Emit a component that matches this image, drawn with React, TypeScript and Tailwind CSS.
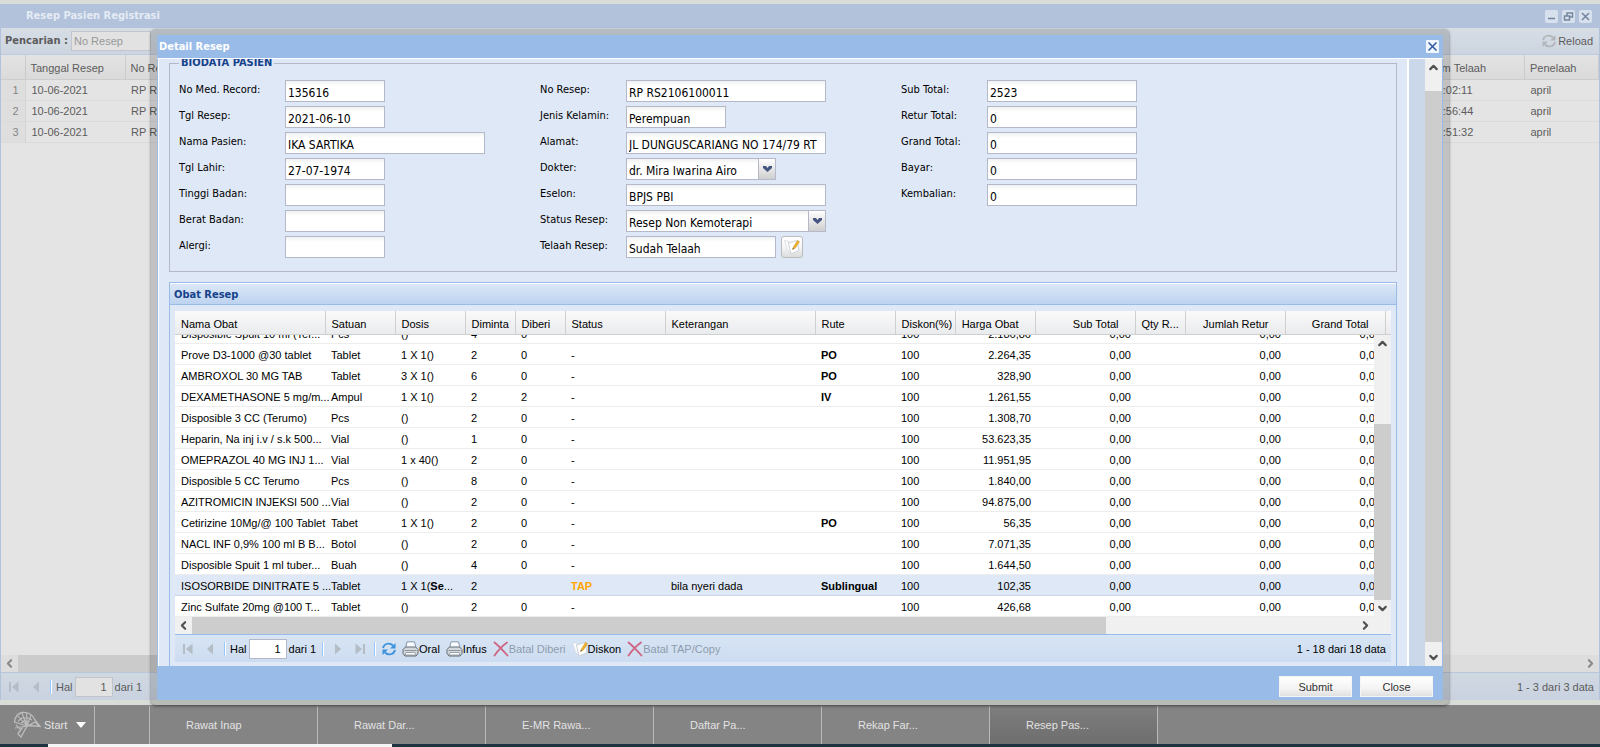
import React from 'react';
import { ChevronDown, ChevronLeft, ChevronRight, ChevronUp } from 'lucide-react';

type Row = {
  name: string;
  unit: string;
  dose: React.ReactNode;
  asked: string;
  given: string;
  status: string;
  note?: string;
  route?: string;
  price: string;
  selected?: boolean;
};

const ROWS: Row[] = [
  { name: 'Disposible Spuit 10 ml (Ter...', unit: 'Pcs', dose: '()', asked: '4', given: '0', status: '', price: '2.186,86' },
  { name: 'Prove D3-1000 @30 tablet', unit: 'Tablet', dose: '1 X 1()', asked: '2', given: '0', status: '-', route: 'PO', price: '2.264,35' },
  { name: 'AMBROXOL 30 MG TAB', unit: 'Tablet', dose: '3 X 1()', asked: '6', given: '0', status: '-', route: 'PO', price: '328,90' },
  { name: 'DEXAMETHASONE 5 mg/m...', unit: 'Ampul', dose: '1 X 1()', asked: '2', given: '2', status: '-', route: 'IV', price: '1.261,55' },
  { name: 'Disposible 3 CC (Terumo)', unit: 'Pcs', dose: '()', asked: '2', given: '0', status: '-', price: '1.308,70' },
  { name: 'Heparin, Na inj i.v / s.k 500...', unit: 'Vial', dose: '()', asked: '1', given: '0', status: '-', price: '53.623,35' },
  { name: 'OMEPRAZOL 40 MG INJ 1...', unit: 'Vial', dose: '1 x 40()', asked: '2', given: '0', status: '-', price: '11.951,95' },
  { name: 'Disposible 5 CC Terumo', unit: 'Pcs', dose: '()', asked: '8', given: '0', status: '-', price: '1.840,00' },
  { name: 'AZITROMICIN INJEKSI 500 ...', unit: 'Vial', dose: '()', asked: '2', given: '0', status: '-', price: '94.875,00' },
  { name: 'Cetirizine 10Mg/@ 100 Tablet', unit: 'Tabet', dose: '1 X 1()', asked: '2', given: '0', status: '-', route: 'PO', price: '56,35' },
  { name: 'NACL INF 0,9% 100 ml B B...', unit: 'Botol', dose: '()', asked: '2', given: '0', status: '-', price: '7.071,35' },
  { name: 'Disposible Spuit 1 ml tuber...', unit: 'Buah', dose: '()', asked: '4', given: '0', status: '-', price: '1.644,50' },
  { name: 'ISOSORBIDE DINITRATE 5 ...', unit: 'Tablet', dose: <>1 X 1(<b>Se</b>...</>, asked: '2', given: '', status: 'TAP', note: 'bila nyeri dada', route: 'Sublingual', price: '102,35', selected: true },
  { name: 'Zinc Sulfate 20mg @100 T...', unit: 'Tablet', dose: '()', asked: '2', given: '0', status: '-', price: '426,68' },
];

const COLUMNS = [
  { title: 'Nama Obat', width: 150 },
  { title: 'Satuan', width: 70 },
  { title: 'Dosis', width: 70 },
  { title: 'Diminta', width: 50 },
  { title: 'Diberi', width: 50 },
  { title: 'Status', width: 100 },
  { title: 'Keterangan', width: 150 },
  { title: 'Rute', width: 80 },
  { title: 'Diskon(%)', width: 60 },
  { title: 'Harga Obat', width: 80, right: true },
  { title: 'Sub Total', width: 100, right: true },
  { title: 'Qty R...', width: 50 },
  { title: 'Jumlah Retur', width: 100, right: true },
  { title: 'Grand Total', width: 100, right: true },
];

const REGISTRATIONS = [
  { no: 1, date: '10-06-2021', time: '10:02:11' },
  { no: 2, date: '10-06-2021', time: '10:56:44' },
  { no: 3, date: '10-06-2021', time: '10:51:32' },
];

const TASKS = ['Rawat Inap', 'Rawat Dar...', 'E-MR Rawa...', 'Daftar Pa...', 'Rekap Far...', 'Resep Pas...'];

const Columns = () => (
  <colgroup>
    {COLUMNS.map(c => <col key={c.title} style={{ width: c.width }} />)}
  </colgroup>
);

const FIELD = "h-[22px] min-w-0 border border-[#b5b8c8] bg-gradient-to-b from-[#f0f2f2] via-white via-25% to-white px-[2px] pt-[3px] font-['DejaVu_Sans_Condensed','Noto_Sans',sans-serif] text-[12px] leading-[16px] text-black outline-none";

const HEADING = "font-['DejaVu_Sans_Condensed','Noto_Sans',sans-serif] text-[11px] font-bold";

function Field({ id, label, labelClass, children }: { id: string; label: string; labelClass: string; children: React.ReactNode }) {
  return (
    <div className="flex h-[22px]">
      <label htmlFor={id} className={`${labelClass} shrink-0 pt-[3px] leading-[14px]`}>{label}</label>
      {children}
    </div>
  );
}

function Combo({ id, value, className }: { id: string; value: string; className: string }) {
  return (
    <span className={`${className} flex`}>
      <select id={id} defaultValue={value} className={`${FIELD} flex-1 appearance-none border-r-0`}>
        <option>{value}</option>
      </select>
      <span className="flex w-[18px] items-center justify-center border border-[#b5b8c8] bg-gradient-to-b from-white to-[#cfcfcf]">
        <svg width="9" height="7" viewBox="0 0 9 7"><path d="M0 0h3l1.500 2L6 0h3v2L4.500 6 0 2z" fill="#44567f" /></svg>
      </span>
    </span>
  );
}

const NoteIcon = () => (
  <svg width="16" height="16" viewBox="0 0 16 16">
    <path d="M0.500 1.500l4 0.800L7 14.500 3.500 11z" fill="#fbfcfd" stroke="#d3d9df" strokeWidth=".7" />
    <path d="M4.500 4L13 1.500 15 11.500 7 15z" fill="#fff" stroke="#bcc3c9" strokeWidth=".7" />
    <path d="M8.500 10.500l1-2.800 4-6.200 2 1.200-4.200 6.300z" fill="#f0b32a" stroke="#c58a20" strokeWidth=".5" />
    <path d="M8.500 10.500l.5-1.500 1 .8z" fill="#444" />
  </svg>
);

const PrintIcon = () => (
  <svg width="17" height="16" viewBox="0 0 17 16">
    <path d="M3.500 7L5 .8h7.500L14 7z" fill="#f8fbff" stroke="#8795a6" />
    <path d="M1 8.500L3.500 6h10L16 8.500v4L14 15H3l-2-2.500z" fill="#d3d8dd" stroke="#626b75" />
    <path d="M2.500 9.500h12" stroke="#8f98a1" />
    <path d="M4 11.500h9l1 2.500H3z" fill="#fff" stroke="#7b848d" strokeWidth=".7" />
  </svg>
);

const CrossIcon = () => (
  <svg width="16" height="16" viewBox="0 0 16 16">
    <path d="M1.500 1.500C6 5 10 9.500 14.500 14.500M14 1.500C9 5 5 9.500 1.500 14.500" fill="none" stroke="#cf6482" strokeWidth="1.800" strokeLinecap="round" />
  </svg>
);

const RefreshIcon = ({ color = '#3d92dc' }: { color?: string }) => (
  <svg width="16" height="16" viewBox="0 0 16 16" fill="none" stroke={color}>
    <path d="M2 7C3 2.500 8.500 1 12 4.500M14 9C13 13.500 7.500 15 4 11.500" strokeWidth="1.800" />
    <path d="M14.500 2v5.500H9zM1.500 14V8.500H7z" fill={color} stroke="none" />
  </svg>
);

function PageArrow({ end, flip, label }: { end?: boolean; flip?: boolean; label: string }) {
  return (
    <button aria-label={label} disabled className={`flex w-[12px] justify-center ${flip ? 'rotate-180' : ''}`}>
      <svg width="12" height="12" viewBox="0 0 12 12" fill="#b4bcc6">
        {end && <path d="M1 1h2v10H1z" />}
        <path d={end ? 'M10.500 .5v11L4 6z' : 'M9 .5v11L3 6z'} />
      </svg>
    </button>
  );
}

const Separator = () => <span className="h-[14px] w-[2px] border-l border-r border-l-[#98c8ff] border-r-white" />;

const GRID_HEADER = 'h-[24px] border-b border-[#d0d0d0] bg-gradient-to-b from-[#fafafa] to-[#eaebed]';

function DrugGrid() {
  return (
    <div className="bg-white">
      <div className={`${GRID_HEADER} overflow-hidden`}>
        <table className="w-[1210px] table-fixed border-collapse">
          <Columns />
          <thead>
            <tr className="h-[23px]">
              {COLUMNS.map(c => (
                <th key={c.title} className={`whitespace-nowrap border-r border-[#cfcfcf] pl-[6px] pt-[3px] font-normal ${c.right ? 'pr-[16px] text-right' : 'text-left'}`}>
                  {c.title}
                </th>
              ))}
            </tr>
          </thead>
        </table>
      </div>
      <div className="flex h-[282px]">
        <div className="flex min-w-0 flex-1 flex-col justify-end overflow-hidden">
          <table className="w-[1210px] table-fixed border-separate border-spacing-0">
            <Columns />
            <tbody>
              {ROWS.map(row => (
                <tr
                  key={row.name}
                  className={`h-[21px] [&>td]:whitespace-nowrap [&>td]:border-b [&>td]:pl-[6px] [&>td]:pr-[4px] [&>td]:pt-[2px] ${row.selected ? 'bg-[#dfe8f6] [&>td]:border-[#c9d5e8]' : '[&>td]:border-[#ededed]'}`}
                >
                  <td>{row.name}</td>
                  <td>{row.unit}</td>
                  <td>{row.dose}</td>
                  <td>{row.asked}</td>
                  <td>{row.given}</td>
                  <td className={row.status === 'TAP' ? 'font-bold text-[#ffa500]' : ''}>{row.status}</td>
                  <td>{row.note}</td>
                  <td className="font-bold">{row.route}</td>
                  <td>100</td>
                  <td className="text-right">{row.price}</td>
                  <td className="text-right">0,00</td>
                  <td />
                  <td className="text-right">0,00</td>
                  <td className="text-right">0,00</td>
                </tr>
              ))}
            </tbody>
          </table>
        </div>
        <div className="flex w-[17px] flex-col items-center bg-[#f0f0f0] text-[#505050]">
          <ChevronUp size={13} strokeWidth={4} className="my-[2px]" />
          <div className="mt-[72px] w-full flex-1 bg-[#cdcdcd]" />
          <ChevronDown size={13} strokeWidth={4} className="my-[2px]" />
        </div>
      </div>
      <div className="flex h-[17px] items-center bg-[#f0f0f0] text-[#505050]">
        <ChevronLeft size={13} strokeWidth={4} className="mx-[2px]" />
        <div className="h-full w-[914px] bg-[#cdcdcd]" />
        <ChevronRight size={13} strokeWidth={4} className="ml-auto mr-[19px]" />
      </div>
    </div>
  );
}

function DrugPaging() {
  return (
    <div className="flex h-[28px] items-center border-t border-[#99bbe8] bg-gradient-to-b from-[#d7e5f4] to-[#cddcf0] pl-[7px] pr-[5px]">
      <PageArrow end label="Halaman pertama" />
      <span className="w-[10px]" />
      <PageArrow label="Halaman sebelumnya" />
      <span className="w-[8px]" />
      <Separator />
      <label htmlFor="page" className="ml-[4px]">Hal</label>
      <input id="page" defaultValue="1" className="mx-[2px] h-[20px] w-[38px] border border-[#b5b8c8] bg-white px-[5px] text-right" />
      <span className="mr-[6px]">dari 1</span>
      <Separator />
      <span className="w-[8px]" />
      <PageArrow flip label="Halaman berikutnya" />
      <span className="w-[10px]" />
      <PageArrow flip end label="Halaman terakhir" />
      <span className="w-[8px]" />
      <Separator />
      <button aria-label="Muat ulang" className="ml-[5px] mr-[5px]"><RefreshIcon /></button>
      <button className="mr-[6px] flex items-center"><PrintIcon />Oral</button>
      <button className="mr-[6px] flex items-center"><PrintIcon />Infus</button>
      <button disabled className="mr-[6px] flex items-center text-[#8e9cae]"><CrossIcon />Batal Diberi</button>
      <button className="mr-[6px] flex items-center"><NoteIcon />Diskon</button>
      <button disabled className="flex items-center text-[#8e9cae]"><CrossIcon />Batal TAP/Copy</button>
      <span className="ml-auto">1 - 18 dari 18 data</span>
    </div>
  );
}

function Biodata() {
  return (
    <fieldset className="mx-[10px] flex h-[217px] min-w-0 border border-[#b5b8c8] px-[9px] font-['DejaVu_Sans_Condensed','Noto_Sans',sans-serif]">
      <legend className={`${HEADING} px-[2px] leading-[16px] text-[#15428b]`}>BIODATA PASIEN</legend>
      <div className="flex pt-[9px]">
        <div className="flex w-[361px] flex-col gap-[4px]">
          <Field id="mr" label="No Med. Record:" labelClass="w-[106px]"><input id="mr" readOnly defaultValue="135616" className={`${FIELD} w-[100px]`} /></Field>
          <Field id="tgl" label="Tgl Resep:" labelClass="w-[106px]"><input id="tgl" readOnly defaultValue="2021-06-10" className={`${FIELD} w-[100px]`} /></Field>
          <Field id="nama" label="Nama Pasien:" labelClass="w-[106px]"><input id="nama" readOnly defaultValue="IKA SARTIKA" className={`${FIELD} w-[200px]`} /></Field>
          <Field id="lahir" label="Tgl Lahir:" labelClass="w-[106px]"><input id="lahir" readOnly defaultValue="27-07-1974" className={`${FIELD} w-[100px]`} /></Field>
          <Field id="tinggi" label="Tinggi Badan:" labelClass="w-[106px]"><input id="tinggi" className={`${FIELD} w-[100px]`} /></Field>
          <Field id="berat" label="Berat Badan:" labelClass="w-[106px]"><input id="berat" className={`${FIELD} w-[100px]`} /></Field>
          <Field id="alergi" label="Alergi:" labelClass="w-[106px]"><input id="alergi" className={`${FIELD} w-[100px]`} /></Field>
        </div>
        <div className="flex w-[361px] flex-col gap-[4px]">
          <Field id="resep" label="No Resep:" labelClass="w-[86px]"><input id="resep" readOnly defaultValue="RP RS2106100011" className={`${FIELD} w-[200px]`} /></Field>
          <Field id="jk" label="Jenis Kelamin:" labelClass="w-[86px]"><input id="jk" readOnly defaultValue="Perempuan" className={`${FIELD} w-[100px]`} /></Field>
          <Field id="alamat" label="Alamat:" labelClass="w-[86px]"><input id="alamat" readOnly defaultValue="JL DUNGUSCARIANG NO 174/79 RT" className={`${FIELD} w-[200px]`} /></Field>
          <Field id="dokter" label="Dokter:" labelClass="w-[86px]"><Combo id="dokter" value="dr. Mira Iwarina Airo" className="w-[150px]" /></Field>
          <Field id="eselon" label="Eselon:" labelClass="w-[86px]"><input id="eselon" readOnly defaultValue="BPJS PBI" className={`${FIELD} w-[200px]`} /></Field>
          <Field id="status" label="Status Resep:" labelClass="w-[86px]"><Combo id="status" value="Resep Non Kemoterapi" className="w-[200px]" /></Field>
          <Field id="telaah" label="Telaah Resep:" labelClass="w-[86px]">
            <input id="telaah" readOnly defaultValue="Sudah Telaah" className={`${FIELD} w-[150px]`} />
            <button aria-label="Telaah" className="ml-[5px] flex w-[22px] items-center justify-center rounded-[3px] border border-[#bcbcbc] bg-gradient-to-b from-white via-[#f6f6f6] to-[#dcdcdc]"><NoteIcon /></button>
          </Field>
        </div>
        <div className="flex flex-col gap-[4px]">
          <Field id="sub" label="Sub Total:" labelClass="w-[86px]"><input id="sub" readOnly defaultValue="2523" className={`${FIELD} w-[150px]`} /></Field>
          <Field id="retur" label="Retur Total:" labelClass="w-[86px]"><input id="retur" readOnly defaultValue="0" className={`${FIELD} w-[150px]`} /></Field>
          <Field id="grand" label="Grand Total:" labelClass="w-[86px]"><input id="grand" readOnly defaultValue="0" className={`${FIELD} w-[150px]`} /></Field>
          <Field id="bayar" label="Bayar:" labelClass="w-[86px]"><input id="bayar" readOnly defaultValue="0" className={`${FIELD} w-[150px]`} /></Field>
          <Field id="kembali" label="Kembalian:" labelClass="w-[86px]"><input id="kembali" readOnly defaultValue="0" className={`${FIELD} w-[150px]`} /></Field>
        </div>
      </div>
    </fieldset>
  );
}

function DetailDialog() {
  return (
    <section className="flex min-h-0 flex-1 flex-col rounded-[5px] bg-black/15 px-[6px] pb-[5px] pt-[6px] shadow-[0_1px_3px_0_rgba(0,0,0,0.5)]">
      <header className="flex h-[23px] shrink-0 items-center justify-between bg-[#99bbe8] pl-[2px] pr-[4px]">
        <h2 className={`${HEADING} text-white`}>Detail Resep</h2>
        <button aria-label="Tutup" className="flex h-[13px] w-[13px] items-center justify-center rounded-[1px] bg-[#f0f6ff]">
          <svg width="9" height="9" viewBox="0 0 9 9"><path d="M.5.5l8 8M8.500.5l-8 8" stroke="#2f56a4" strokeWidth="1.500" /></svg>
        </button>
      </header>
      <div className="flex min-h-0 flex-1 border border-[#99bbe8] border-t-white bg-[#cad8ea]">
        <div className="min-w-0 flex-1 overflow-hidden border-l border-white bg-[#dfe8f6]">
          <div className="-mt-[4px]">
            <Biodata />
            <div className="mx-[10px] mt-[10px] border border-b-0 border-[#99bbe8]">
              <h3 className={`${HEADING} h-[22px] border-b border-t border-b-[#99bbe8] border-t-white bg-gradient-to-b from-[#dbe7f7] from-0% via-[#cddef3] via-48% to-[#bdd3f1] pl-[4px] pt-[3px] leading-[16px] text-[#15428b]`}>Obat Resep</h3>
              <div className="px-[5px] pb-[20px] pt-[6px]">
                <DrugGrid />
                <DrugPaging />
              </div>
            </div>
          </div>
        </div>
        <div className="w-[18px] border-l-2 border-l-white" />
        <div className="flex w-[17px] flex-col items-center bg-[#f0f0f0] text-[#505050]">
          <ChevronUp size={13} strokeWidth={4} className="mb-[17px] mt-[2px]" />
          <div className="w-full flex-1 bg-[#cdcdcd]" />
          <ChevronDown size={13} strokeWidth={4} className="mb-[2px] mt-[9px]" />
        </div>
      </div>
      <footer className="flex h-[33px] shrink-0 items-end justify-end gap-[8px] bg-[#99bbe8] pb-[3px] pr-[10px]">
        <button className="h-[21px] w-[73px] border border-[#f4f4f4] bg-gradient-to-b from-white via-[#f4f4f4] via-60% to-[#e0e0e0] text-[#333]">Submit</button>
        <button className="h-[21px] w-[73px] border border-[#f4f4f4] bg-gradient-to-b from-white via-[#f4f4f4] via-60% to-[#e0e0e0] text-[#333]">Close</button>
      </footer>
    </section>
  );
}

function RegistrationWindow() {
  return (
    <section className="flex flex-1 flex-col border-x border-[#b2c2db] bg-[#e4e4e4] text-[#5c5c5c]">
      <header className="flex h-[24px] items-center gap-[4px] bg-[#b2c2db] pl-[25px] pr-[7px]">
        <h1 className={`${HEADING} mr-auto text-[#e4ebf4]`}>Resep Pasien Registrasi</h1>
        {['M3 8.500h7', 'M2.500 6h5v4h-5zM5 5.500V3h5.500v4H8', 'M3 3l7 7M10 3l-7 7'].map(d => (
          <button key={d} aria-label="Jendela" className="flex h-[13px] w-[13px] items-center justify-center rounded-[2px] bg-[#d7e0ed]">
            <svg width="13" height="13" viewBox="0 0 13 13" fill="none" stroke="#74859f" strokeWidth="1.500"><path d={d} /></svg>
          </button>
        ))}
      </header>
      <div className="flex h-[27px] items-center border-b border-[#bccbde] bg-gradient-to-b from-[#d6dde5] to-[#cdd5e0] pl-[4px] pr-[6px]">
        <label htmlFor="cari" className={`${HEADING} w-[66px] whitespace-nowrap`}>Pencarian :</label>
        <input id="cari" placeholder="No Resep" className="h-[20px] w-[80px] border border-[#c3c5cc] bg-[#e2e2e2] px-[2px] placeholder:text-[#999]" />
        <button className="ml-auto flex items-center gap-[1px]"><RefreshIcon color="#b3b7ba" />Reload</button>
      </div>
      <table className="w-full table-fixed border-collapse text-left">
        <colgroup>
          <col className="w-[24px]" />
          <col className="w-[100px]" />
          <col />
          <col className="w-[100px]" />
          <col className="w-[74px]" />
        </colgroup>
        <thead className="bg-gradient-to-b from-[#e3e3e3] to-[#dadada]">
          <tr className="h-[24px] border-b border-[#cdcdcd] [&>th]:border-r [&>th]:border-[#cbcbcb] [&>th]:px-[5px] [&>th]:pt-[2px] [&>th]:font-normal">
            <th />
            <th>Tanggal Resep</th>
            <th>No Resep</th>
            <th>Jam Telaah</th>
            <th>Penelaah</th>
          </tr>
        </thead>
        <tbody>
          {REGISTRATIONS.map(r => (
            <tr key={r.no} className="h-[21px] border-b border-[#dadada] [&>td]:px-[6px]">
              <td className="border-r border-[#d4d4d4] bg-[#dedede] text-right text-[#858585]">{r.no}</td>
              <td>{r.date}</td>
              <td>RP RS2106100011</td>
              <td>{r.time}</td>
              <td>april</td>
            </tr>
          ))}
        </tbody>
      </table>
      <div className="mt-auto flex h-[17px] items-center bg-[#dddddd] text-[#8a8a8a]">
        <ChevronLeft size={13} strokeWidth={4} className="mx-[2px]" />
        <div className="h-full w-[1200px] bg-[#cbcbcb]" />
        <ChevronRight size={13} strokeWidth={4} className="ml-auto mr-[2px]" />
      </div>
      <div className="flex h-[28px] items-center border-t border-[#b7c6da] bg-gradient-to-b from-[#d0d8e2] to-[#c9d2df] pl-[7px] pr-[5px]">
        <PageArrow end label="Pertama" />
        <span className="w-[10px]" />
        <PageArrow label="Sebelumnya" />
        <span className="w-[8px]" />
        <Separator />
        <label htmlFor="hal" className="ml-[4px]">Hal</label>
        <input id="hal" defaultValue="1" className="mx-[2px] h-[20px] w-[38px] border border-[#c3c5cc] bg-[#e2e2e2] px-[5px] text-right" />
        <span>dari 1</span>
        <span className="ml-auto">1 - 3 dari 3 data</span>
      </div>
    </section>
  );
}

function Taskbar() {
  return (
    <nav className="flex h-[39px] items-end bg-[#848484] text-[#e2e2e2]">
      <button className="flex h-[38px] w-[95px] items-center border-r border-[#b9b9b9] pl-[13px]">
        <svg width="29" height="28" viewBox="0 0 29 28" fill="none" stroke="#bdbdbd">
          <path d="M14 15L1.500 11C2 6 5 2.500 9 1.500 15 .5 20 4 22 9l5 6.500-10-1-3 .5-6 11-3-3 4-6" strokeWidth="1.300" />
          <path d="M14 15L5 5M14 15L9 2M14 15L13.500 2M14 15L18 4M14 15l-12 2M14 15l8-4M5 10l4-3 6 0 4 2M8 12l3-2 5 .5M3 14l5 5M11 15l-6 7M17 14l5-3 4 4" strokeWidth="1.100" />
        </svg>
        <span className="ml-[2px]">Start</span>
        <svg className="ml-[9px]" width="10" height="6" viewBox="0 0 10 6"><path d="M0 0h10L5 6z" fill="#fff" /></svg>
      </button>
      <span className="h-[38px] w-[55px] border-r border-[#b9b9b9]" />
      {TASKS.map((task, i) => (
        <button key={task} className={`h-[38px] w-[168px] border-r border-[#b9b9b9] pl-[36px] text-left ${i === 5 ? 'bg-gradient-to-b from-[#7e7e7e] to-[#6e6e6e]' : ''}`}>
          {task}
        </button>
      ))}
    </nav>
  );
}

export default function App() {
  return (
    <div className="relative flex min-h-screen flex-col overflow-hidden bg-[#d9ddd8] pt-[4px] font-['Liberation_Sans',Arial,sans-serif] text-[11px] leading-[14px] text-black">
      <RegistrationWindow />
      <div className="h-[5px]" />
      <Taskbar />
      <div className="flex h-[3px] bg-[#1c3340] pl-[48px]">
        <span className="w-[344px] bg-[#f4f4f4]" />
      </div>
      <div className="absolute inset-x-0 bottom-[42px] top-[29px] flex flex-col px-[151px]">
        <DetailDialog />
      </div>
    </div>
  );
}
